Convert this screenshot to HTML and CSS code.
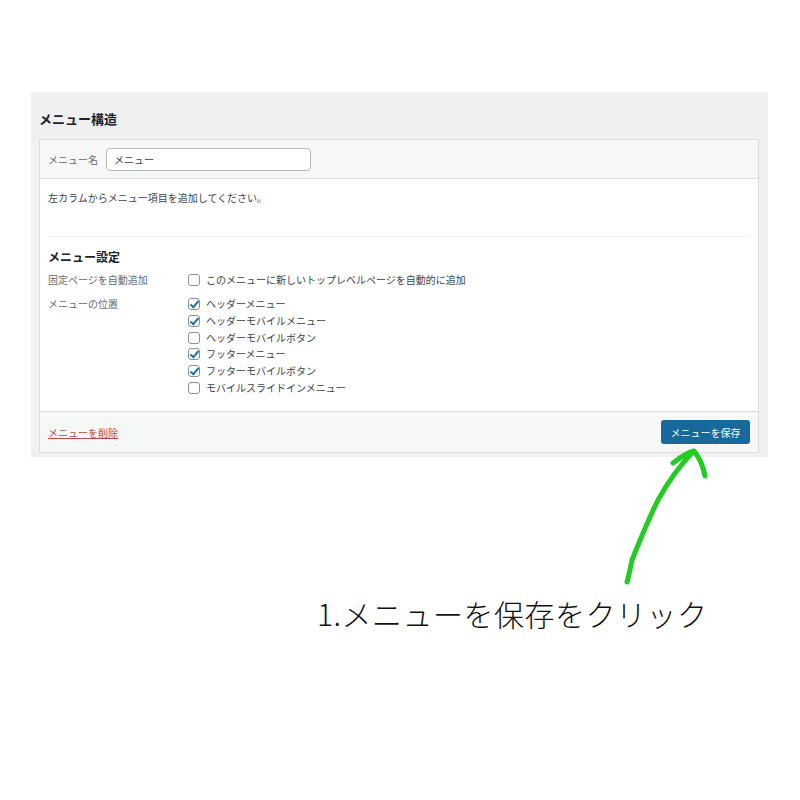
FILE: index.html
```html
<!DOCTYPE html>
<html lang="ja">
<head>
<meta charset="utf-8">
<link rel="stylesheet" href="styles.css">
</head>
<body>
<div class="page">
  <div class="panel">
    <h2 class="title">メニュー構造</h2>
    <div class="box">
      <div class="box-head">
        <span class="name-label">メニュー名</span>
        <div class="name-input">メニュー</div>
      </div>
      <div class="box-body">
        <p class="hint">左カラムからメニュー項目を追加してください。</p>
        <div class="sep"></div>
        <h3 class="subtitle">メニュー設定</h3>
        <div class="row">
          <div class="row-label">固定ページを自動追加</div>
          <div class="opts">
            <div class="opt"><span class="cb"></span>このメニューに新しいトップレベルページを自動的に追加</div>
          </div>
        </div>
        <div class="row row-loc">
          <div class="row-label">メニューの位置</div>
          <div class="opts">
            <div class="opt"><span class="cb on"></span>ヘッダーメニュー</div>
            <div class="opt"><span class="cb on"></span>ヘッダーモバイルメニュー</div>
            <div class="opt"><span class="cb"></span>ヘッダーモバイルボタン</div>
            <div class="opt"><span class="cb on"></span>フッターメニュー</div>
            <div class="opt"><span class="cb on"></span>フッターモバイルボタン</div>
            <div class="opt"><span class="cb"></span>モバイルスライドインメニュー</div>
          </div>
        </div>
      </div>
      <div class="box-foot">
        <a class="delete">メニューを削除</a>
        <span class="save">メニューを保存</span>
      </div>
    </div>
  </div>
  <svg class="arrow" width="800" height="800" viewBox="0 0 800 800">
    <path d="M627 582 C629 575 630 570 632 560 C640 540 648 520 658 500 C668 482 680 465 693 452 M673 463 C682 456 688 452 694 451 C700 458 703 466 705 476" fill="none" stroke="#22cc22" stroke-width="5" stroke-linecap="round" stroke-linejoin="round"/>
  </svg>
  <p class="caption">1.メニューを保存をクリック</p>
</div>
</body>
</html>
```
FILE: styles.css
```css
* { box-sizing: border-box; }
html, body { margin: 0; padding: 0; background: #fff; }
body { font-family: "Noto Sans CJK JP", "Noto Sans", sans-serif; color: #3c434a; }
.page { position: relative; width: 800px; height: 800px; padding-top: 92px; }
.panel {
  margin-left: 31px; width: 737px; height: 365px;
  background: #f0f0f1; padding: 17px 10px 0 8px;
}
.title { margin: 0 0 10px 0; font-size: 13px; font-weight: 700; color: #1d2327; line-height: 20px; height: 20px; }
.box { border: 1px solid #dcdcde; background: #fff; width: 720px; height: 314px; display: flex; flex-direction: column; }
.box-head {
  height: 39px; background: #f6f7f7; border-bottom: 1px solid #e0e0e2;
  display: flex; align-items: center; padding: 0 8px; gap: 8px;
}
.name-label { font-size: 10px; color: #646970; }
.name-input {
  width: 205px; height: 23px; border: 1px solid #b4b7bb; border-radius: 4px; background: #fff;
  font-size: 10px; color: #3c434a; padding: 0 7px; display: flex; align-items: center;
}
.box-body { flex: 1; padding: 0 8px; }
.hint { margin: 12px 0 0 0; font-size: 10px; line-height: 14px; color: #3c434a; }
.sep { margin-top: 31px; height: 1px; background: #f0f0f1; }
.subtitle { margin: 12px 0 0 0; font-size: 12px; font-weight: 700; color: #1d2327; line-height: 16px; }
.row { display: flex; margin-top: 8px; }
.row-loc { margin-top: 10px; }
.row-label { width: 140px; font-size: 10px; color: #646970; line-height: 14px; }
.opts { display: flex; flex-direction: column; gap: 2.8px; }
.opt { display: flex; align-items: center; font-size: 10px; color: #3c434a; line-height: 14px; }
.cb {
  width: 12px; height: 12px; border: 1px solid #8c8f94; border-radius: 3px; background: #fff;
  margin-right: 6px; position: relative; flex: none;
}
.cb.on::after {
  content: ""; position: absolute; left: 3px; top: 0px; width: 3px; height: 7px;
  border: solid #2271b1; border-width: 0 2px 2px 0; transform: rotate(40deg);
}
.box-foot {
  height: 41px; background: #f6f7f7; border-top: 1px solid #dcdcde;
  display: flex; align-items: center; justify-content: space-between; padding: 0 8px;
}
.delete { font-size: 10px; color: #b32d2e; text-decoration: underline; opacity: 0.85; }
.save {
  width: 89px; height: 24px; background: #17699b; color: #fff; border-radius: 3px;
  font-size: 10px; display: flex; align-items: center; justify-content: center;
}
.arrow { position: absolute; left: 0; top: 0; pointer-events: none; }
.caption {
  margin: 136px 0 0 317px; font-size: 30px; font-weight: 300; color: #111; line-height: 40px;
  letter-spacing: 0.5px;
}
```
